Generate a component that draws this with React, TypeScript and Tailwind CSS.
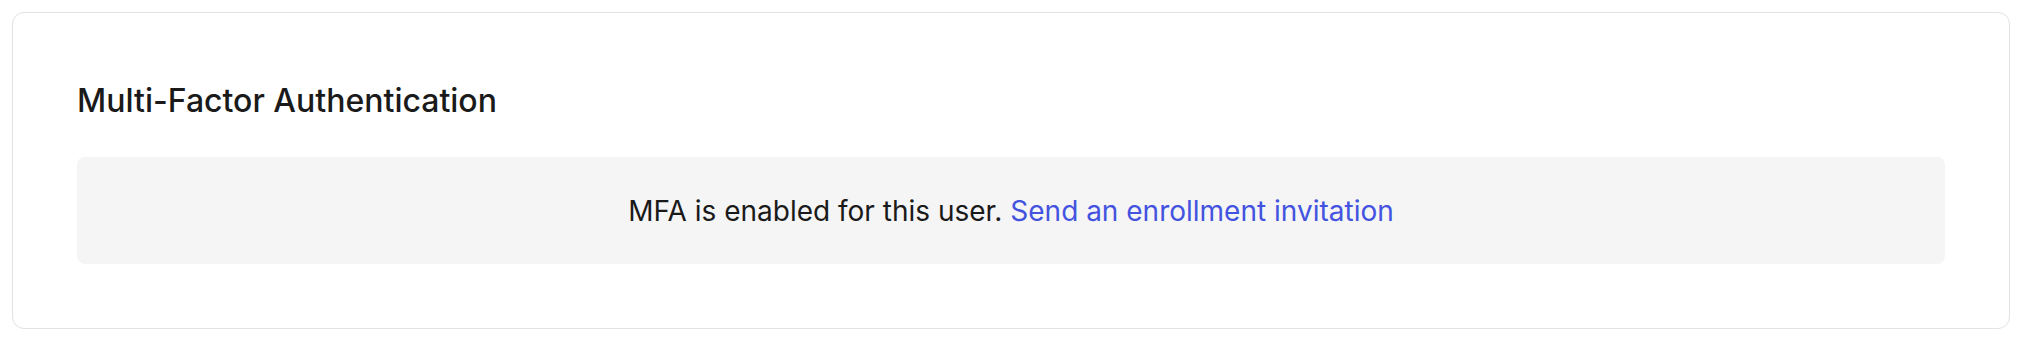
export default function App() {
  return (
    <div className="min-h-screen bg-white pt-3 pl-3" style={{ fontFamily: 'Inter, "Noto Sans", sans-serif' }}>
      <div className="w-[1998px] rounded-[12px] border border-[#e2e2e2] bg-white p-16">
        <h2 className="text-[32px] leading-[48px] font-medium text-[#1a1a1a]">Multi-Factor Authentication</h2>
        <div className="mt-8 flex h-[107px] items-center justify-center rounded-[8px] bg-[#f5f5f5]">
          <p className="text-[28px] leading-[40px] text-[#1a1a1a]">
            MFA is enabled for this user.{' '}
            <a href="#" className="text-[#4353e0]">Send an enrollment invitation</a>
          </p>
        </div>
      </div>
    </div>
  );
}
